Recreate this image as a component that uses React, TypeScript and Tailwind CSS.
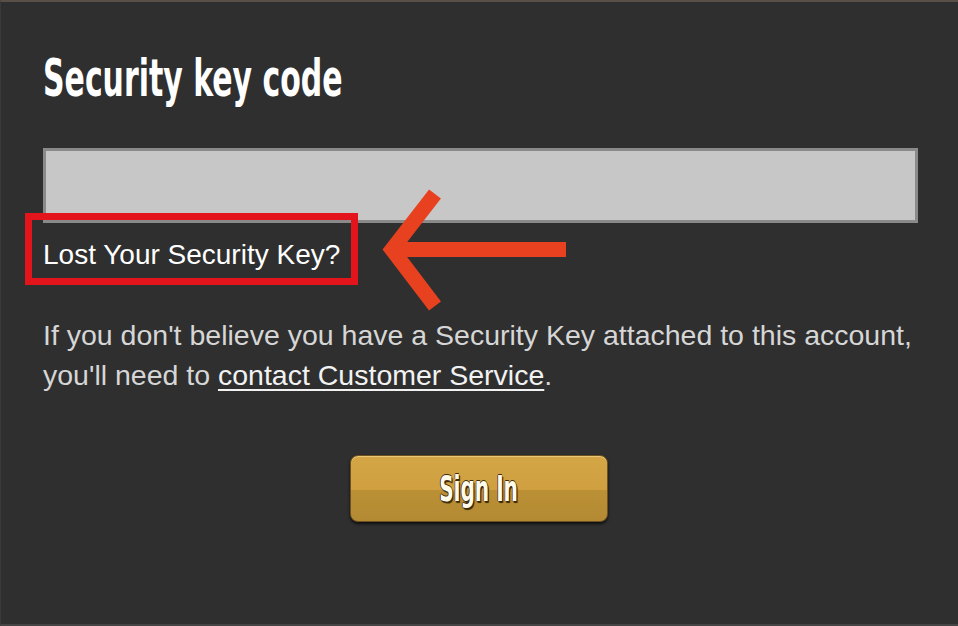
import React from "react";

const condensed = {
  fontFamily: '"Liberation Sans Narrow", "DejaVu Sans Condensed", "Liberation Sans", sans-serif',
};
const arial = { fontFamily: '"Liberation Sans", Arial, sans-serif' };

// 재현: 보안 키 코드 입력 화면
export default function App() {
  return (
    <div className="relative w-[958px] h-[626px] overflow-hidden bg-[#2f2f2f] border-t-2 border-t-[#5a4f47] border-l border-l-[#3a3a3a] border-b-2 border-b-[#444]">
      <div className="px-[42px]">
        <h1
          style={condensed}
          className="mt-[50px] h-[52px] text-[52px] leading-[52px] font-bold text-white whitespace-nowrap origin-left scale-x-[0.64]"
        >
          Security key code
        </h1>

        <input
          type="text"
          className="block mt-[44px] w-[875px] h-[75px] bg-[#c7c7c7] border-[3px] border-[#8a8a8a] outline-none"
        />

        <div style={arial} className="mt-[12px] h-[40px] text-[28px] leading-[40px] text-white">
          Lost Your Security Key?
        </div>

        <p style={arial} className="mt-[40px] text-[28.5px] leading-[40px] text-[#d6d6d6] whitespace-nowrap">
          If you don't believe you have a Security Key attached to this account,
          <br />
          you'll need to{" "}
          <a href="#" className="text-[#f2f2f2] underline underline-offset-4 decoration-2">
            contact Customer Service
          </a>
          .
        </p>

        <div className="mt-[60px] flex justify-center pr-[2px]">
          <button className="relative w-[258px] h-[67px] rounded-[8px] border border-[#6e5120] bg-[linear-gradient(to_bottom,#d4a646_0%,#cf9f40_52%,#bb9035_53%,#b38a33_100%)] shadow-[inset_0_1px_0_#ecc777,0_2px_3px_rgba(0,0,0,0.7)] flex items-center justify-center">
            <span
              style={condensed}
              className="block text-[36px] leading-none font-bold text-[#fffbea] origin-center scale-x-[0.62] [text-shadow:1px_1px_0_#3b2a0c,-1px_0_0_#3b2a0c,0_-1px_0_#3b2a0c,2px_2px_1px_#3b2a0c]"
            >
              Sign In
            </span>
          </button>
        </div>
      </div>

      {/* red highlight box */}
      <div className="absolute left-[24px] top-[211px] w-[333px] h-[72px] border-[7px] border-[#e3141b]" />

      {/* arrow */}
      <svg className="absolute left-[369px] top-[178px]" width="210" height="140" viewBox="0 0 210 140">
        <path d="M196 69.5 H24" stroke="#e8411f" strokeWidth="15" fill="none" />
        <path
          d="M65 14 L22 69.5 L65 126"
          stroke="#e8411f"
          strokeWidth="15"
          fill="none"
          strokeLinejoin="miter"
          strokeMiterlimit="10"
        />
      </svg>
    </div>
  );
}
